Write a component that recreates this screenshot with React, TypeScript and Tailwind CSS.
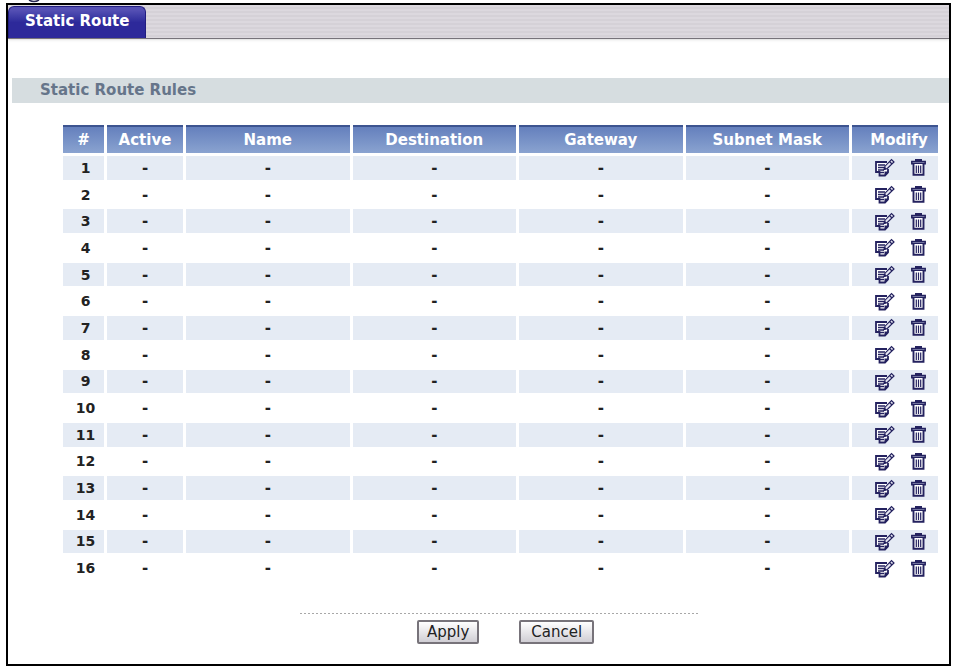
import { useState } from 'react';

const COLUMNS = ['#', 'Active', 'Name', 'Destination', 'Gateway', 'Subnet Mask'];

const emptyRule = { active: '-', name: '-', destination: '-', gateway: '-', mask: '-' };

const initialRules = Array.from({ length: 16 }, (_, index) => ({ id: index + 1, ...emptyRule }));

const EditIcon = () => (
  <svg width="20" height="19" viewBox="0 0 20 19" fill="none" aria-hidden="true">
    <path d="M12 4H1v10h3.500v3.500H10l3-3V11" fill="#fff" stroke="#24225f" strokeWidth="1.8" />
    <path d="M3 7h7M3 9.500h6M3 12h6M4.500 14.500H9" stroke="#24225f" strokeWidth="1.5" />
    <path d="M9.500 18v-4.500h4.200z" fill="#24225f" />
    <path d="M9 11.500l1-3.300L16.500 1.500 19 4l-6.700 6.500z" fill="#e4e4f0" stroke="#24225f" strokeWidth="1.2" />
    <path d="M14.500 3.500L17 6" stroke="#24225f" strokeWidth="1.2" />
    <path d="M8.500 12l1-3.500 2.500 2.500z" fill="#24225f" />
  </svg>
);

const TrashIcon = () => (
  <svg width="15" height="17" viewBox="0 0 15 17" fill="none" aria-hidden="true">
    <path d="M4 0h7v2H4z" fill="#24225f" />
    <path d="M.8 4.800V2.500h13.400v2.300z" fill="#8d90b5" stroke="#24225f" strokeWidth="1.5" />
    <path d="M2.500 5v10.700h10V5" fill="#fff" stroke="#24225f" strokeWidth="1.9" />
    <path d="M5.300 6.500v7.500M7.500 6.500v7.500M9.700 6.500v7.500" stroke="#24225f" strokeWidth="1.2" />
  </svg>
);

const RuleRow = ({ rule, onDelete }) => (
  <tr className="font-bold [&:nth-child(odd)>*]:bg-[#e5ebf4]">
    <th scope="row" className="pl-1 text-sm leading-5">{rule.id}</th>
    <td>{rule.active}</td>
    <td>{rule.name}</td>
    <td>{rule.destination}</td>
    <td>{rule.gateway}</td>
    <td>{rule.mask}</td>
    <td>
      <div className="flex items-center justify-center gap-4 pl-[10px]">
        <button type="button" aria-label={`Edit rule ${rule.id}`}>
          <EditIcon />
        </button>
        <button type="button" aria-label={`Delete rule ${rule.id}`} onClick={() => onDelete(rule.id)}>
          <TrashIcon />
        </button>
      </div>
    </td>
  </tr>
);

export default function App() {
  const [rules, setRules] = useState(initialRules);

  const handleDelete = (id) => {
    setRules(rules.map((rule) => (rule.id === id ? { id, ...emptyRule } : rule)));
  };

  return (
    <div className="bg-white pr-[3px] pb-[2px] pl-[6px] font-['DejaVu_Sans',sans-serif] text-[15px] text-[#222]">
      <div className="h-[3px] pl-[22px]">
        <svg className="block" width="12" height="3" viewBox="0 0 12 3" fill="none" aria-hidden="true">
          <path d="M1 0q5 3 10 0" stroke="#2b2a55" strokeWidth="1.5" />
        </svg>
      </div>
      <main className="border-2 border-black">
        <nav className="flex h-[34px] items-end border-b border-[#77737a] bg-[repeating-linear-gradient(#dcd8de_0px,#dcd8de_2px,#d5d1d7_2px,#d5d1d7_4px)] shadow-sm">
          <a
            href="#static-route"
            className="flex h-8 items-center rounded-t-md border border-b-0 border-[#211d80] bg-linear-to-b from-[#5550b4] from-10% to-[#2d299a] to-50% px-4 pb-0.5 font-bold text-white"
          >
            Static Route
          </a>
        </nav>

        <h1 className="mt-[39px] ml-1 flex h-[25px] items-center bg-[#d6dde0] pl-7 font-bold text-[#66758a]">
          Static Route Rules
        </h1>

        <form onSubmit={(event) => event.preventDefault()}>
          <div className="mt-[19px] mr-2 ml-[52px]">
            <table className="h-[461px] w-full table-fixed border-separate border-spacing-[3px] text-center leading-5">
              <colgroup>
                <col className="w-[41px]" />
                <col className="w-[76px]" />
                <col />
                <col />
                <col />
                <col />
                <col className="w-[86px]" />
              </colgroup>
              <thead>
                <tr className="h-7 text-white">
                  {COLUMNS.map((column) => (
                    <th key={column} scope="col" className="border-t-2 border-[#3d5490] bg-linear-to-b from-[#6580bd] to-[#8aa3d0] font-bold">
                      {column}
                    </th>
                  ))}
                  <th scope="col" className="border-t-2 border-[#3d5490] bg-linear-to-b from-[#6580bd] to-[#8aa3d0] pl-2 font-bold">
                    Modify
                  </th>
                </tr>
              </thead>
              <tbody>
                {rules.map((rule) => (
                  <RuleRow key={rule.id} rule={rule} onDelete={handleDelete} />
                ))}
              </tbody>
            </table>
          </div>

          <div className="mt-[30px] flex flex-col items-center pl-[42px]">
            <div className="h-px w-[400px] bg-[repeating-linear-gradient(90deg,#a8a8a8_0px,#a8a8a8_2px,transparent_2px,transparent_4px)]" />
            <div className="mt-[6px] mb-5 flex gap-10 pl-3">
              <button type="submit" className="h-6 rounded-xs border-2 border-[#77737a] bg-linear-to-b from-white to-[#d0ced4] px-2 leading-5">
                Apply
              </button>
              <button type="reset" className="h-6 rounded-xs border-2 border-[#77737a] bg-linear-to-b from-white to-[#d0ced4] px-[10px] leading-5">
                Cancel
              </button>
            </div>
          </div>
        </form>
      </main>
    </div>
  );
}
